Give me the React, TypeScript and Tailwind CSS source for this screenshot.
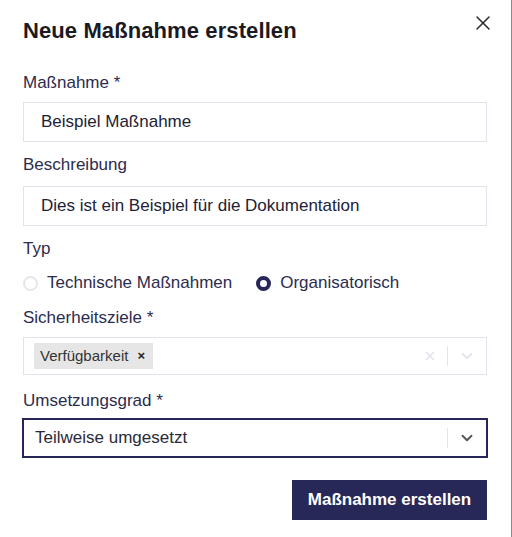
import { X, ChevronDown } from "lucide-react";

const font = { fontFamily: '"Liberation Sans", Arial, sans-serif' };

function Label({ children }: { children: React.ReactNode }) {
    return <label className="block text-[17px] leading-[20px] text-[#2c2c4e]">{children}</label>;
}

export default function App() {
    return (
        <div className="flex w-[512px] h-[537px] bg-white" style={font}>
            {/* Modal panel */}
            <div className="w-[511px] h-full bg-white pl-[23px] pr-[24px] pt-[17px]">
                <div className="flex items-start justify-between h-[27px]">
                    <h2 className="text-[22px] leading-[27px] font-bold tracking-[0.1px] text-[#1a1a24]">Neue Maßnahme erstellen</h2>
                    <button className="mt-[-6px] mr-[-8px] text-[#2a2a2a]">
                        <X size={24} strokeWidth={1.5} />
                    </button>
                </div>

                <div className="mt-[29px] flex flex-col">
                    <Label>Maßnahme *</Label>
                    <div className="mt-[9px] h-[40px] border border-[#dfe4ec] flex items-center px-[17px] text-[17px] text-[#222236]">
                        Beispiel Maßnahme
                    </div>

                    <div className="mt-[13px]">
                        <Label>Beschreibung</Label>
                    </div>
                    <div className="mt-[11px] h-[40px] border border-[#dfe4ec] flex items-center px-[17px] text-[17px] text-[#222236]">
                        Dies ist ein Beispiel für die Dokumentation
                    </div>

                    <div className="mt-[13px]">
                        <Label>Typ</Label>
                    </div>
                    <div className="mt-[13px] flex items-center gap-[24px] text-[17px] text-[#2c2c4e] h-[22px]">
                        <div className="flex items-center gap-[9px]">
                            <span className="w-[15px] h-[15px] rounded-full border-2 border-[#e3e7ee]" />
                            <span>Technische Maßnahmen</span>
                        </div>
                        <div className="flex items-center gap-[9px]">
                            <span className="w-[15px] h-[15px] rounded-full border-[4.5px] border-[#262658] bg-white" />
                            <span>Organisatorisch</span>
                        </div>
                    </div>

                    <div className="mt-[14px]">
                        <Label>Sicherheitsziele *</Label>
                    </div>
                    <div className="mt-[9px] h-[38px] border border-[#dfe4ec] flex items-center pl-[10px] pr-[10px]">
                        <span className="flex items-center h-[26px] bg-[#e6e6e6] pl-[6px] pr-[8px] text-[15px] text-[#333]">
                            Verfügbarkeit
                            <span className="ml-[9px] text-[13px] font-bold text-[#222]">×</span>
                        </span>
                        <div className="ml-auto flex items-center">
                            <X size={14} strokeWidth={3} className="text-[#e2e6ec]" />
                            <span className="mx-[10px] w-px h-[20px] bg-[#e2e6ec]" />
                            <ChevronDown size={18} strokeWidth={2.5} className="text-[#e2e6ec]" />
                        </div>
                    </div>

                    <div className="mt-[16px]">
                        <Label>Umsetzungsgrad *</Label>
                    </div>
                    <div className="mt-[7px] mx-[-1px] h-[40px] border-2 border-[#262658] flex items-center pl-[11px] pr-[10px] text-[17px] text-[#2a2a3a]">
                        Teilweise umgesetzt
                        <div className="ml-auto flex items-center">
                            <span className="mr-[10px] w-px h-[20px] bg-[#e2e6ec]" />
                            <ChevronDown size={18} strokeWidth={2.5} className="text-[#555]" />
                        </div>
                    </div>

                    <div className="mt-[22px] flex justify-end">
                        <button className="h-[40px] w-[195px] bg-[#272758] text-white text-[17px] font-bold">
                            Maßnahme erstellen
                        </button>
                    </div>
                </div>
            </div>
            {/* page edge behind the modal */}
            <div className="w-px h-full bg-[#8a8a8a]" />
        </div>
    );
}
